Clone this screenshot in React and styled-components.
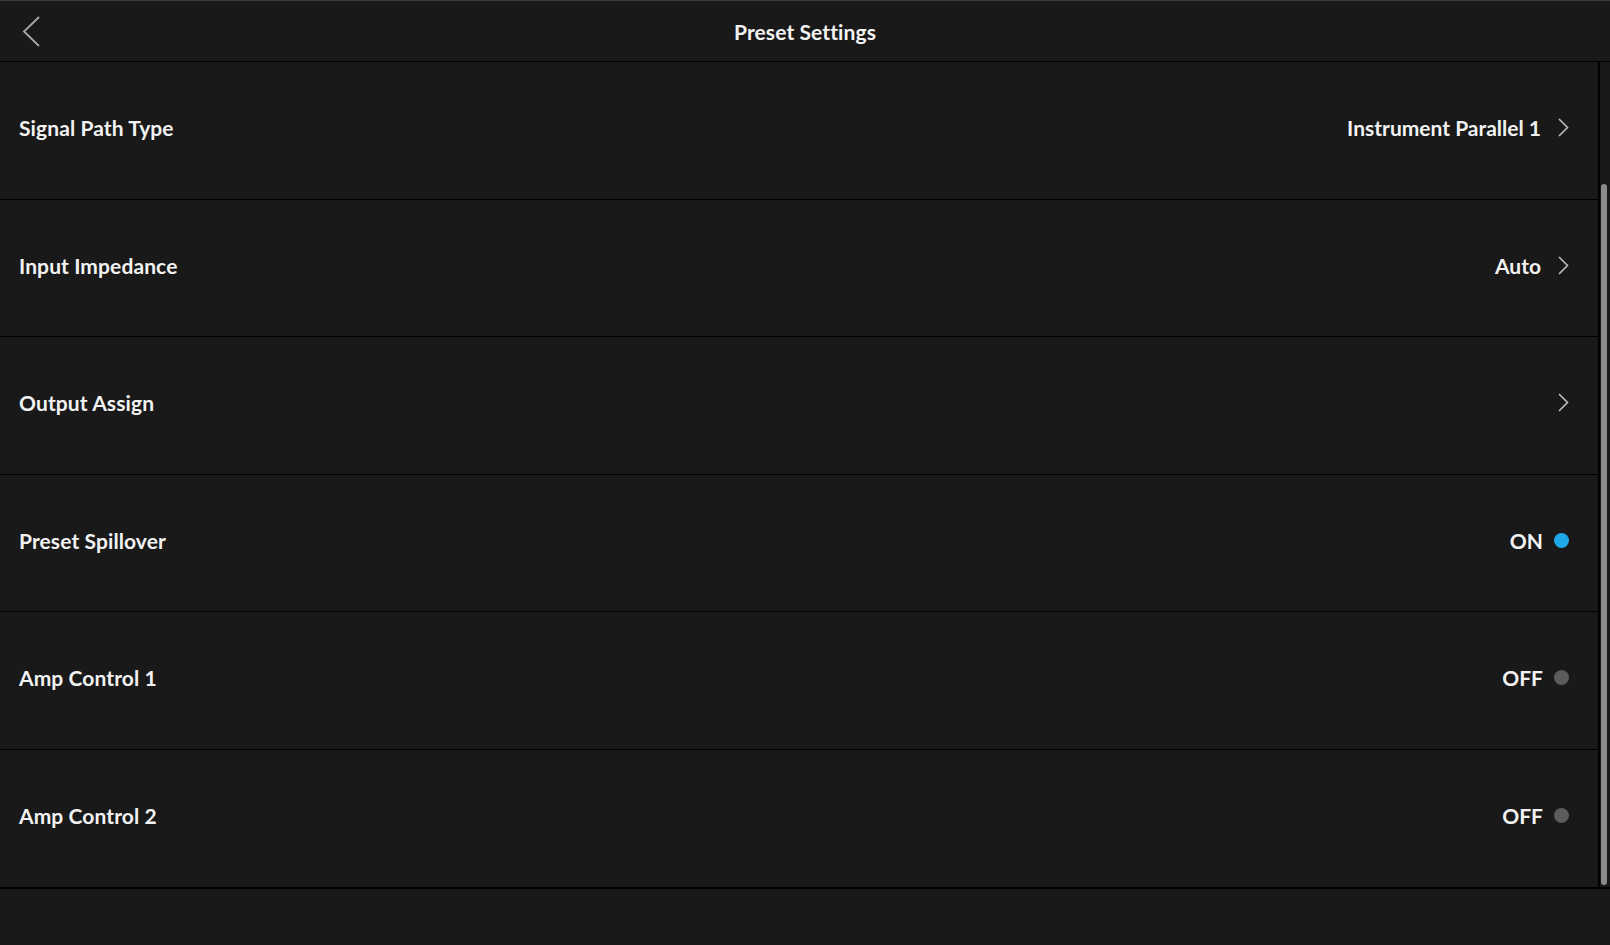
import React from "react";
import styled, { createGlobalStyle } from "styled-components";

const Global = createGlobalStyle`
  html, body { margin: 0; padding: 0; background: #191919; }
  body { font-family: "Lato", "Open Sans", sans-serif; color: #f2f2f2; }
  * { box-sizing: border-box; }
`;

const Screen = styled.div`
  width: 1610px;
  height: 945px;
  background: #191919;
  border-top: 1px solid #3a3a3a;
  display: flex;
  flex-direction: column;
  overflow: hidden;
`;

const Header = styled.header`
  height: 61px;
  flex: none;
  display: grid;
  grid-template-columns: 80px 1fr 80px;
  align-items: center;
  border-bottom: 1px solid #000;
`;

const BackButton = styled.button`
  background: none;
  border: 0;
  padding: 0 0 0 22px;
  height: 100%;
  display: flex;
  align-items: center;
  cursor: pointer;
`;

const Title = styled.h1`
  margin: 0;
  text-align: center;
  font-size: 21px;
  font-weight: 700;
  color: #f4f4f4;
  letter-spacing: 0.1px;
  padding-top: 1px;
`;

const Body = styled.div`
  display: flex;
  flex: none;
  border-bottom: 2px solid #000;
`;

const List = styled.div`
  flex: 1;
  display: flex;
  flex-direction: column;
  border-right: 2px solid #000;
`;

const Row = styled.div`
  height: 137.5px;
  display: flex;
  align-items: center;
  justify-content: space-between;
  padding: 0 29px 5px 19px;
  border-bottom: ${(p) => (p.$last ? "0" : "1px solid #000")};
`;

const Label = styled.span`
  font-size: 21px;
  font-weight: 700;
  color: #f2f2f2;
  letter-spacing: 0.1px;
`;

const Value = styled.div`
  display: flex;
  align-items: center;
  gap: ${(p) => (p.$dot ? "11px" : "17px")};
  font-size: 21px;
  font-weight: 700;
  color: #f2f2f2;
`;

const Dot = styled.span`
  width: 15px;
  height: 15px;
  border-radius: 50%;
  background: ${(p) => (p.$on ? "#1ea9e8" : "#5c5c5c")};
`;

const Track = styled.div`
  width: 10px;
  position: relative;
`;

const Thumb = styled.div`
  position: absolute;
  left: 1px;
  width: 6px;
  top: 122px;
  bottom: 2px;
  border-radius: 3px;
  background: #8a8a8a;
`;

const Chevron = ({ dir = "right", color = "#bdbdbd", width = 1.6 }) => (
  <svg
    width={dir === "left" ? 18 : 11}
    height={dir === "left" ? 31 : 19}
    viewBox={dir === "left" ? "0 0 18 31" : "0 0 11 19"}
    fill="none"
  >
    {dir === "left" ? (
      <path d="M17 1 L2 15.5 L17 30" stroke={color} strokeWidth={width} />
    ) : (
      <path d="M1 1 L9.5 9.5 L1 18" stroke={color} strokeWidth={width} />
    )}
  </svg>
);

const rows = [
  { label: "Signal Path Type", value: "Instrument Parallel 1", kind: "nav" },
  { label: "Input Impedance", value: "Auto", kind: "nav" },
  { label: "Output Assign", value: "", kind: "nav" },
  { label: "Preset Spillover", value: "ON", kind: "toggle", on: true },
  { label: "Amp Control 1", value: "OFF", kind: "toggle", on: false },
  { label: "Amp Control 2", value: "OFF", kind: "toggle", on: false },
];

export default function App() {
  return (
    <>
      <Global />
      <Screen>
        <Header>
          <BackButton aria-label="Back">
            <Chevron dir="left" color="#a8a8a8" width={1.8} />
          </BackButton>
          <Title>Preset Settings</Title>
          <span />
        </Header>
        <Body>
          <List>
            {rows.map((r, i) => (
              <Row key={r.label} $last={i === rows.length - 1}>
                <Label>{r.label}</Label>
                {r.kind === "nav" ? (
                  <Value>
                    {r.value && <span>{r.value}</span>}
                    <Chevron color="#bdbdbd" width={1.6} />
                  </Value>
                ) : (
                  <Value $dot>
                    <span>{r.value}</span>
                    <Dot $on={r.on} />
                  </Value>
                )}
              </Row>
            ))}
          </List>
          <Track>
            <Thumb />
          </Track>
        </Body>
      </Screen>
    </>
  );
}
